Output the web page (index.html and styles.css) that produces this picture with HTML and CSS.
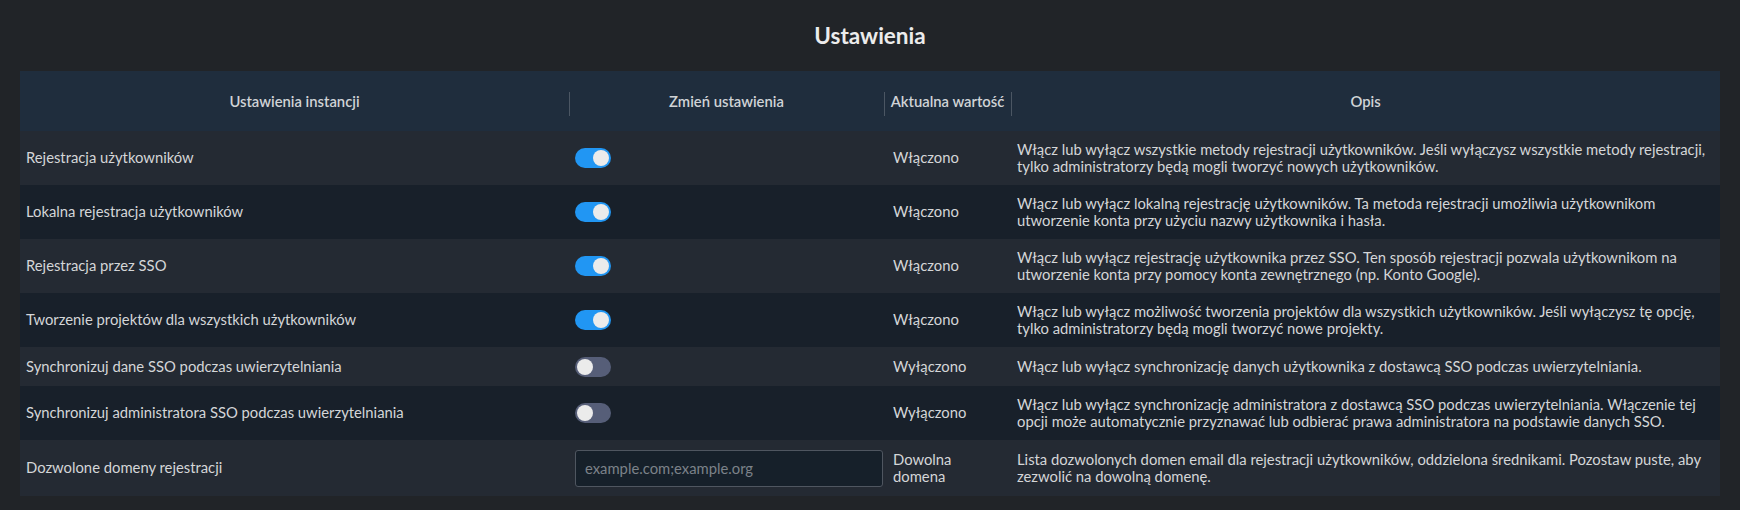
FILE: index.html
```html
<!DOCTYPE html>
<html lang="pl">
<head>
<meta charset="utf-8">
<title>Ustawienia</title>
<link rel="stylesheet" href="styles.css">
</head>
<body>
<main class="page">
  <h1 class="title">Ustawienia</h1>
  <table class="settings">
    <colgroup>
      <col class="c-name">
      <col class="c-ctrl">
      <col class="c-val">
      <col class="c-desc">
    </colgroup>
    <thead>
      <tr>
        <th>Ustawienia instancji</th>
        <th class="sep">Zmień ustawienia</th>
        <th class="sep">Aktualna wartość</th>
        <th class="sep">Opis</th>
      </tr>
    </thead>
    <tbody>
      <tr>
        <td>Rejestracja użytkowników</td>
        <td><span class="toggle on"><span class="knob"></span></span></td>
        <td>Włączono</td>
        <td>Włącz lub wyłącz wszystkie metody rejestracji użytkowników. Jeśli wyłączysz wszystkie metody rejestracji, tylko administratorzy będą mogli tworzyć nowych użytkowników.</td>
      </tr>
      <tr>
        <td>Lokalna rejestracja użytkowników</td>
        <td><span class="toggle on"><span class="knob"></span></span></td>
        <td>Włączono</td>
        <td>Włącz lub wyłącz lokalną rejestrację użytkowników. Ta metoda rejestracji umożliwia użytkownikom utworzenie konta przy użyciu nazwy użytkownika i hasła.</td>
      </tr>
      <tr>
        <td>Rejestracja przez SSO</td>
        <td><span class="toggle on"><span class="knob"></span></span></td>
        <td>Włączono</td>
        <td>Włącz lub wyłącz rejestrację użytkownika przez SSO. Ten sposób rejestracji pozwala użytkownikom na utworzenie konta przy pomocy konta zewnętrznego (np. Konto Google).</td>
      </tr>
      <tr>
        <td>Tworzenie projektów dla wszystkich użytkowników</td>
        <td><span class="toggle on"><span class="knob"></span></span></td>
        <td>Włączono</td>
        <td>Włącz lub wyłącz możliwość tworzenia projektów dla wszystkich użytkowników. Jeśli wyłączysz tę opcję, tylko administratorzy będą mogli tworzyć nowe projekty.</td>
      </tr>
      <tr>
        <td>Synchronizuj dane SSO podczas uwierzytelniania</td>
        <td><span class="toggle"><span class="knob"></span></span></td>
        <td>Wyłączono</td>
        <td>Włącz lub wyłącz synchronizację danych użytkownika z dostawcą SSO podczas uwierzytelniania.</td>
      </tr>
      <tr>
        <td>Synchronizuj administratora SSO podczas uwierzytelniania</td>
        <td><span class="toggle"><span class="knob"></span></span></td>
        <td>Wyłączono</td>
        <td>Włącz lub wyłącz synchronizację administratora z dostawcą SSO podczas uwierzytelniania. Włączenie tej opcji może automatycznie przyznawać lub odbierać prawa administratora na podstawie danych SSO.</td>
      </tr>
      <tr>
        <td>Dozwolone domeny rejestracji</td>
        <td><input class="field" type="text" placeholder="example.com;example.org"></td>
        <td>Dowolna domena</td>
        <td>Lista dozwolonych domen email dla rejestracji użytkowników, oddzielona średnikami. Pozostaw puste, aby zezwolić na dowolną domenę.</td>
      </tr>
    </tbody>
  </table>
</main>
</body>
</html>
```

FILE: styles.css
```css
html, body {
  margin: 0;
  padding: 0;
  background: #212428;
}

body {
  font-family: Lato, "Noto Sans", sans-serif;
  color: #d4d6d8;
  font-size: 14.8px;
}

.page {
  padding: 0 20px;
}

.title {
  margin: 0;
  height: 71px;
  display: flex;
  align-items: center;
  justify-content: center;
  font-size: 22.5px;
  font-weight: 700;
  color: #ececec;
}

.settings {
  width: 1700px;
  border-collapse: collapse;
  table-layout: fixed;
}

.c-name { width: 549px; }
.c-ctrl { width: 315px; }
.c-val { width: 127px; }
.c-desc { width: 709px; }

.settings th {
  height: 60px;
  padding: 0 4px;
  background: #1f2d3d;
  font-weight: 600;
  color: #d0d3d6;
  text-align: center;
  white-space: nowrap;
  position: relative;
}

.settings th.sep::before {
  content: "";
  position: absolute;
  left: 0;
  top: 21px;
  height: 24px;
  width: 1px;
  background: #4b5663;
}

.settings tbody tr {
  height: 38px;
}

.settings td {
  padding: 9.5px 6px;
  line-height: 17.5px;
  vertical-align: middle;
}

.settings td:nth-child(3) {
  padding-left: 9px;
  padding-right: 8px;
}

.settings tbody tr:nth-child(odd) {
  background: #242a33;
}

.settings tbody tr:nth-child(even) {
  background: #18202a;
}

.toggle {
  display: flex;
  align-items: center;
  width: 36px;
  height: 20px;
  border-radius: 10px;
  background: #565e78;
  padding: 0 2px;
  box-sizing: border-box;
}

.toggle.on {
  background: #2196f3;
  justify-content: flex-end;
}

.knob {
  width: 16px;
  height: 16px;
  border-radius: 50%;
  background: #ebebeb;
}

.field {
  display: block;
  width: 308px;
  height: 37px;
  box-sizing: border-box;
  margin: 0;
  background: #16202a;
  border: 1px solid #4f5660;
  border-radius: 3px;
  padding: 0 9px;
  font-family: Lato, "Noto Sans", sans-serif;
  font-size: 14.8px;
  color: #d4d6d8;
  outline: none;
}

.field::placeholder {
  color: #7c8289;
}
```
